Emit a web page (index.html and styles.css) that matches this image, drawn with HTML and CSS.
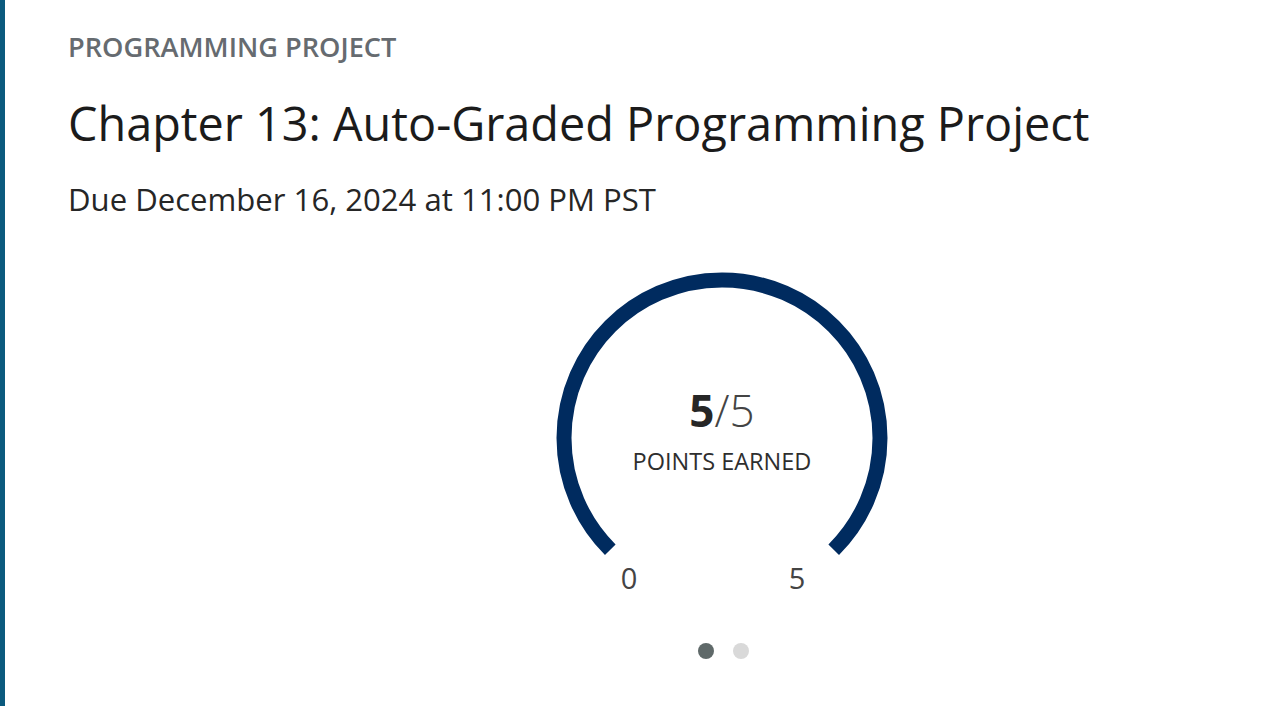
FILE: index.html
```html
<!DOCTYPE html>
<html>
<head>
<meta charset="utf-8">
<link rel="stylesheet" href="styles.css">
</head>
<body>
<div class="card">
  <div class="eyebrow">PROGRAMMING PROJECT</div>
  <h1 class="title">Chapter 13: Auto-Graded Programming Project</h1>
  <div class="due">Due December 16, 2024 at 11:00 PM PST</div>
  <div class="carousel">
    <div class="gauge">
      <svg class="gauge-arc" width="340" height="340" viewBox="0 0 340 340">
        <path d="M 58.28 281.72 A 158 158 0 1 1 281.72 281.72" fill="none" stroke="#002b5f" stroke-width="15"/>
      </svg>
      <div class="score"><span class="earned">5</span><span class="total">/5</span></div>
      <div class="score-label">POINTS EARNED</div>
      <span class="tick tick-min">0</span>
      <span class="tick tick-max">5</span>
    </div>
    <div class="dots">
      <span class="dot active"></span>
      <span class="dot"></span>
    </div>
  </div>
</div>
</body>
</html>
```

FILE: styles.css
```css
html, body {
  margin: 0;
  padding: 0;
  background: #ffffff;
}
body {
  font-family: "Open Sans", "Noto Sans", sans-serif;
  height: 706px;
  overflow: hidden;
}
.card {
  border-left: 5px solid #0b5a7e;
  padding: 31px 0 0 63px;
  height: 675px;
}
.eyebrow {
  font-size: 27.2px;
  line-height: 1.2;
  font-weight: 600;
  color: #666b70;
}
.title {
  margin: 31px 0 0;
  font-size: 46.8px;
  line-height: 1.2;
  font-weight: 400;
  color: #1b1b1b;
}
.due {
  margin-top: 30px;
  font-size: 31.1px;
  line-height: 1.2;
  color: #262626;
}
.carousel {
  margin: 50px 0 0 484px;
  width: 340px;
}
.gauge {
  position: relative;
  width: 340px;
  height: 340px;
  display: flex;
  flex-direction: column;
  align-items: center;
}
.gauge-arc {
  position: absolute;
  left: 0;
  top: 0;
}
.score {
  position: relative;
  margin-top: 116px;
  font-size: 44px;
  line-height: 1.2;
  color: #262626;
}
.earned { font-weight: 700; }
.total { font-weight: 300; color: #444; }
.score-label {
  position: relative;
  margin-top: 10px;
  font-size: 23.5px;
  line-height: 1.2;
  font-weight: 500;
  color: #2e2e2e;
}
.tick {
  position: absolute;
  top: 293px;
  font-size: 29px;
  line-height: 1.2;
  color: #444;
  transform: translateX(-50%);
}
.tick-min { left: 77px; }
.tick-max { left: 245px; }
.dots {
  display: flex;
  justify-content: center;
  gap: 19px;
  margin-top: 35px;
  padding-left: 3px;
}
.dot {
  width: 16px;
  height: 16px;
  border-radius: 50%;
  background: #d9d9d9;
}
.dot.active {
  background: #5f6969;
}
```
